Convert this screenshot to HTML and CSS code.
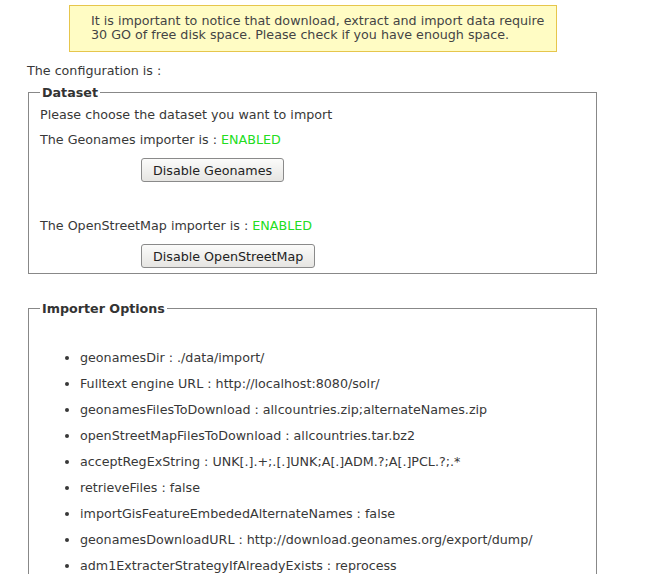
FILE: index.html
```html
<!DOCTYPE html>
<html>
<head>
<meta charset="utf-8">
<link rel="stylesheet" href="styles.css">
</head>
<body>
<div class="page">
  <div class="warning">It is important to notice that download, extract and import data require<br>30 GO of free disk space. Please check if you have enough space.</div>
  <p class="intro">The configuration is :</p>
  <fieldset class="box dataset">
    <legend>Dataset</legend>
    <p class="line">Please choose the dataset you want to import</p>
    <p class="line">The Geonames importer is : <span class="ok">ENABLED</span></p>
    <div class="btnrow"><button class="btn">Disable Geonames</button></div>
    <p class="line osm">The OpenStreetMap importer is : <span class="ok">ENABLED</span></p>
    <div class="btnrow"><button class="btn">Disable OpenStreetMap</button></div>
  </fieldset>
  <fieldset class="box options">
    <legend>Importer Options</legend>
    <ul class="opts">
      <li>geonamesDir : ./data/import/</li>
      <li>Fulltext engine URL : http://localhost:8080/solr/</li>
      <li>geonamesFilesToDownload : allcountries.zip;alternateNames.zip</li>
      <li>openStreetMapFilesToDownload : allcountries.tar.bz2</li>
      <li>acceptRegExString : UNK[.].+;.[.]UNK;A[.]ADM.?;A[.]PCL.?;.*</li>
      <li>retrieveFiles : false</li>
      <li>importGisFeatureEmbededAlternateNames : false</li>
      <li>geonamesDownloadURL : http://download.geonames.org/export/dump/</li>
      <li>adm1ExtracterStrategyIfAlreadyExists : reprocess</li>
    </ul>
  </fieldset>
</div>
</body>
</html>
```
FILE: styles.css
```css
html, body {
  margin: 0;
  padding: 0;
  background: #fff;
}
body {
  font-family: "DejaVu Sans", Verdana, sans-serif;
  font-size: 12.7px;
  color: #383838;
  overflow: hidden;
}
.page {
  padding: 5px 0 0 27px;
  width: 570px;
}
.warning {
  margin-left: 42px;
  width: 465px;
  white-space: nowrap;
  border: 1px solid #e6c64c;
  background: #fffcc4;
  padding: 8px 0 9px 21px;
  line-height: 14px;
  color: #444;
}
.intro {
  margin: 11px 0 0 0;
  line-height: 15px;
}
.box {
  border: 1px solid #888;
  margin: 7px 0 0 1px;
  padding: 0 11px 5px 11px;
  width: 545px;
}
.box legend {
  font-weight: bold;
  padding: 0 2px;
  margin-left: 0;
  line-height: 15px;
  color: #333;
}
.line {
  margin: 0;
  line-height: 15px;
}
.dataset .line { margin-top: 10px; }
.dataset .line:first-of-type { margin-top: 7px; }
.ok { color: #22dd22; }
.btnrow {
  padding-left: 101px;
  margin-top: 11px;
  line-height: 0;
}
.dataset .osm { margin-top: 36px; }
.btn {
  font-family: "DejaVu Sans", Verdana, sans-serif;
  font-size: 12.7px;
  line-height: 15px;
  color: #222;
  height: 24px;
  padding: 0 11px;
  border: 1px solid #8a8a8a;
  border-radius: 3px;
  background: linear-gradient(#fbfbfa, #e6e5e2);
}
.options {
  margin-top: 27px;
  padding-bottom: 20px;
}
.opts {
  margin: 34px 0 0 0;
  padding-left: 40px;
}
.opts li {
  line-height: 15px;
  margin-bottom: 11px;
}
```
